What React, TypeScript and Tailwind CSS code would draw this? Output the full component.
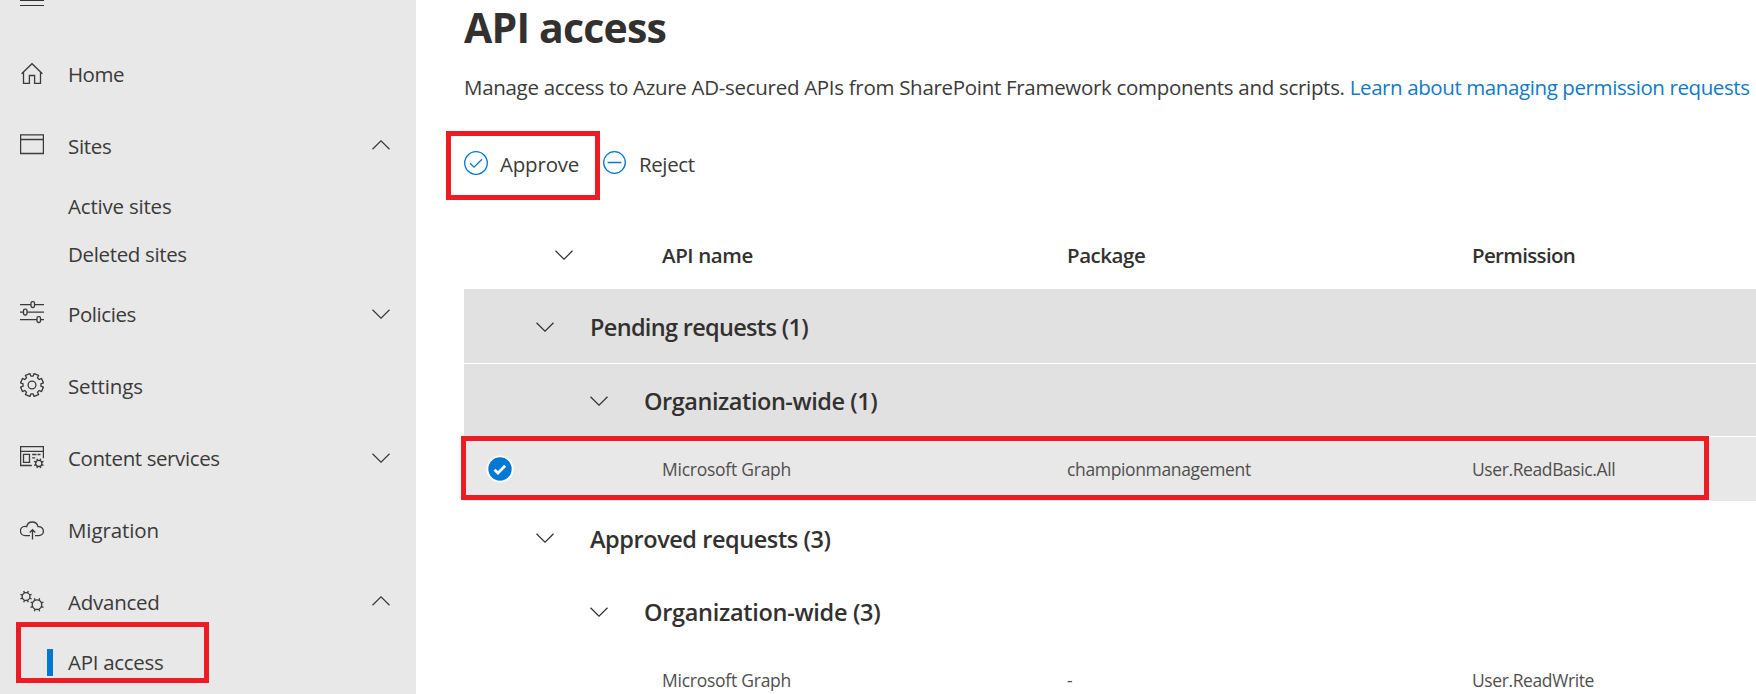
import type { ReactNode } from "react";

type IconProps = { children: ReactNode; className?: string };

function Icon({ children, className = "" }: IconProps) {
  return (
    <svg
      viewBox="0 0 24 24"
      className={`h-6 w-6 shrink-0 ${className}`}
      fill="none"
      stroke="currentColor"
      strokeWidth="1.3"
    >
      {children}
    </svg>
  );
}

/** Outline of a cog wheel with broad teeth. */
function gearPath(cx: number, cy: number, inner: number, outer: number) {
  const points: string[] = [];
  for (let i = 0; i < 8; i++) {
    const mid = 22.5 + i * 45;
    const corners: [number, number][] = [
      [mid - 15, inner],
      [mid - 12, outer],
      [mid + 12, outer],
      [mid + 15, inner],
    ];
    for (const [deg, r] of corners) {
      const a = (deg * Math.PI) / 180;
      points.push(`${(cx + r * Math.cos(a)).toFixed(2)} ${(cy + r * Math.sin(a)).toFixed(2)}`);
    }
  }
  return `M${points.join("L")}Z`;
}

/** Short spokes around a small cog. */
function spokes(cx: number, cy: number, inner: number, outer: number) {
  let d = "";
  for (let i = 0; i < 8; i++) {
    const a = ((22.5 + i * 45) * Math.PI) / 180;
    const c = Math.cos(a);
    const s = Math.sin(a);
    d += `M${(cx + inner * c).toFixed(2)} ${(cy + inner * s).toFixed(2)}L${(cx + outer * c).toFixed(2)} ${(cy + outer * s).toFixed(2)}`;
  }
  return d;
}

const HomeIcon = () => (
  <Icon>
    <path d="M1.6 12.8 12 2.7l10.4 10.1M3.5 11v11.4h5.9v-7.9h5.2v7.9h5.9V11" />
  </Icon>
);
const SitesIcon = () => (
  <Icon>
    <path d="M.6 1.9h22.8v18.6H.6zM.6 6.5h22.8" />
  </Icon>
);
const PoliciesIcon = () => (
  <Icon>
    <path d="M0 3.6h11M14.5 3.6H24M0 11.1h3.5M7 11.1h17M0 18.6h17M20.5 18.6H24" />
    <rect x="11" y="0.7" width="3.5" height="5.8" rx="1.4" />
    <rect x="3.5" y="8.2" width="3.5" height="5.8" rx="1.4" />
    <rect x="17" y="15.7" width="3.5" height="5.8" rx="1.4" />
  </Icon>
);
const SettingsIcon = () => (
  <Icon>
    <path d={gearPath(12, 12, 9, 11.6)} strokeLinejoin="round" />
    <circle cx="12" cy="12" r="3.9" />
  </Icon>
);
const ContentIcon = () => (
  <Icon>
    <path d="M11.8 20.5H.6V1.7h22.8v11.5M.6 6.3h22.8M3.5 9.4h6v8h-6zM12.2 9.5h4.3M17.5 9.5h3M12.2 12.8h3" />
    <circle cx="18.8" cy="18.4" r="3.1" />
    <path d={spokes(18.8, 18.4, 3.1, 5.1)} />
  </Icon>
);
const MigrationIcon = () => (
  <Icon>
    <path d="M10 18.6H5.2A4.6 4.6 0 0 1 5 9.3c.8 0 1.2.1 1.7.3C7.4 6.7 9.6 5 12.2 5c2.9 0 5.2 1.9 5.8 4.6 3.1-.3 5.4 1.8 5.4 4.5s-2 4.5-4.5 4.5H15" />
    <path d="M12.5 22.4V13M9.7 15.5l2.8-2.8 2.8 2.8" />
  </Icon>
);
const AdvancedIcon = () => (
  <Icon>
    <circle cx="6" cy="7.6" r="3.9" />
    <path d={spokes(6, 7.6, 3.9, 6)} />
    <circle cx="17" cy="15.7" r="4.8" />
    <path d={spokes(17, 15.7, 4.8, 7)} />
  </Icon>
);

function Chevron({ up = false, className = "" }: { up?: boolean; className?: string }) {
  return (
    <svg
      viewBox="0 0 18 10"
      className={`h-[10px] w-[18px] shrink-0 ${className}`}
      fill="none"
      stroke="currentColor"
      strokeWidth="1.2"
    >
      <path d={up ? "M.5 9.2 9 .8l8.5 8.4" : "M.5.8 9 9.2 17.5.8"} />
    </svg>
  );
}

function NavItem({
  icon,
  label,
  tracking = "",
  state,
}: {
  icon: ReactNode;
  label: string;
  tracking?: string;
  state?: "open" | "closed";
}) {
  return (
    <div className="flex h-[72px] items-center pr-[26px] pb-[2px] pl-5">
      <span className="mb-[2px] flex">{icon}</span>
      <span className={`ml-6 flex-1 ${tracking}`}>{label}</span>
      {state && <Chevron up={state === "open"} className={state === "open" ? "mb-[3px]" : "mb-px"} />}
    </div>
  );
}

function SubItem({ label, tracking = "", active = false }: { label: string; tracking?: string; active?: boolean }) {
  return (
    <div className="flex h-12 items-center pb-[2px] pl-[47px]">
      <span className={`h-[27px] w-[6px] ${active ? "bg-[#0078d4]" : ""}`} />
      <span className={`ml-[15px] ${tracking}`}>{label}</span>
    </div>
  );
}

function GroupRow({
  label,
  nested = false,
  className,
  tracking,
}: {
  label: string;
  nested?: boolean;
  className: string;
  tracking: string;
}) {
  return (
    <div
      className={`flex items-center pt-[2px] text-[23.5px] font-semibold ${nested ? "pl-[126px]" : "pl-[72px]"} ${className}`}
    >
      <Chevron className="mb-px" />
      <span className={`ml-9 ${tracking}`}>{label}</span>
    </div>
  );
}

const columns = "grid grid-cols-[198px_405px_405px_1fr] items-center";

export default function App() {
  return (
    <div className="relative flex h-[694px] w-[1756px] overflow-hidden bg-white font-['Open_Sans','Noto_Sans',sans-serif] text-[20.5px] leading-[28px] whitespace-nowrap text-[#3b3a39]">
      <nav className="flex w-[416px] shrink-0 flex-col bg-[#e8e8e8]">
        <div className="flex h-[39px] flex-col gap-1 pl-5">
          <span className="h-px w-6 bg-[#323130]" />
          <span className="h-px w-6 bg-[#323130]" />
        </div>
        <NavItem icon={<HomeIcon />} label="Home" tracking="tracking-[-0.5px]" />
        <NavItem icon={<SitesIcon />} label="Sites" tracking="tracking-[-0.3px]" state="open" />
        <SubItem label="Active sites" tracking="tracking-[-0.2px]" />
        <SubItem label="Deleted sites" tracking="tracking-[-0.35px]" />
        <NavItem icon={<PoliciesIcon />} label="Policies" tracking="tracking-[-0.42px]" state="closed" />
        <NavItem icon={<SettingsIcon />} label="Settings" tracking="tracking-[-0.15px]" />
        <NavItem icon={<ContentIcon />} label="Content services" tracking="tracking-[-0.4px]" state="closed" />
        <NavItem icon={<MigrationIcon />} label="Migration" tracking="tracking-[-0.1px]" />
        <NavItem icon={<AdvancedIcon />} label="Advanced" tracking="tracking-[-0.25px]" state="open" />
        <SubItem label="API access" tracking="tracking-[-0.3px]" active />
      </nav>

      <main className="flex min-w-0 flex-1 flex-col pl-12">
        <h1 className="h-[54px] text-[41px] leading-[55px] font-bold tracking-[-0.8px] text-[#323130]">API access</h1>
        <p className="mt-[19px] h-[28px]">
          <span className="tracking-[-0.3px]">
            Manage access to Azure AD-secured APIs from SharePoint Framework components and scripts.{" "}
          </span>
          <a className="tracking-[-0.4px] text-[#0f7ac8]">Learn about managing permission requests</a>
        </p>

        <div className="mt-[49px] flex h-[28px] items-center">
          <Icon className="mb-[2px] text-[#0078d4]">
            <circle cx="12" cy="12" r="11.3" />
            <path d="m6 12.2 4 4 8-8" />
          </Icon>
          <span className="ml-3 w-[103px] tracking-[-0.2px]">Approve</span>
          <Icon className="mb-[3px] text-[#0078d4]">
            <circle cx="11.5" cy="11.5" r="10.8" />
            <path d="M4.6 11.5h13.8" strokeWidth="1.5" />
          </Icon>
          <span className="ml-3 tracking-[-0.4px]">Reject</span>
        </div>

        <div className={`${columns} mt-[63px] h-[47px] font-semibold text-[#323130]`}>
          <Chevron className="ml-[91px]" />
          <span className="tracking-[-0.4px]">API name</span>
          <span className="tracking-[-0.45px]">Package</span>
          <span className="tracking-[-0.65px]">Permission</span>
        </div>

        <section className="mt-5 flex flex-col text-[#323130]">
          <GroupRow label="Pending requests (1)" className="h-[74px] bg-[#e1e1e1]" tracking="tracking-[-0.68px]" />
          <GroupRow
            label="Organization-wide (1)"
            nested
            className="h-[74px] border-y border-white bg-[#e1e1e1]"
            tracking="tracking-[-0.45px]"
          />
          <div className={`${columns} relative h-16 bg-[#e8e8e8] text-[17.5px] text-[#504f4e]`}>
            <svg viewBox="0 0 28 28" className="mb-px ml-[22px] h-7 w-7">
              <circle cx="14" cy="14" r="13.6" fill="#fff" />
              <circle cx="14" cy="14" r="11.7" fill="#0078d4" />
              <path d="m8.5 14.7 3.5 3.3 7.2-7.2" fill="none" stroke="#fff" strokeWidth="2.8" />
            </svg>
            <span className="tracking-[-0.25px]">Microsoft Graph</span>
            <span className="tracking-[-0.35px]">championmanagement</span>
            <span className="tracking-[-0.4px]">User.ReadBasic.All</span>
            <div className="absolute top-[-1px] left-[-3px] h-16 w-[1248px] border-5 border-[#ed1c24]" />
          </div>
          <GroupRow label="Approved requests (3)" className="h-[73px]" tracking="tracking-[-0.43px]" />
          <GroupRow label="Organization-wide (3)" nested className="h-[74px]" tracking="tracking-[-0.3px]" />
          <div className={`${columns} h-16 text-[17.5px] text-[#504f4e]`}>
            <span />
            <span className="tracking-[-0.25px]">Microsoft Graph</span>
            <span>-</span>
            <span className="tracking-[-0.4px]">User.ReadWrite</span>
          </div>
        </section>
      </main>

      <div className="absolute top-[131px] left-[446px] h-[69px] w-[154px] border-5 border-[#ed1c24]" />
      <div className="absolute top-[622px] left-[16px] h-[61px] w-[193px] border-5 border-[#ed1c24]" />
    </div>
  );
}
